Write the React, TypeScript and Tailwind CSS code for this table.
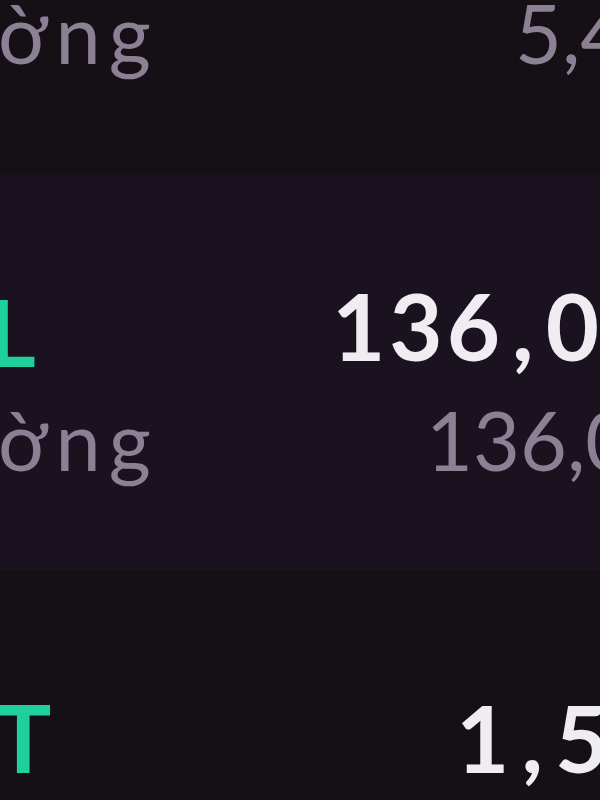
import React from "react";

function BoldNum({ parts }: { parts: string[] }) {
  return (
    <span className="text-[92px] font-bold text-[#efedf1] tracking-[4px]">
      {parts.map((p, i) => (
        <React.Fragment key={i}>
          {i > 0 && <span className="mx-[8px]">,</span>}
          {p}
        </React.Fragment>
      ))}
    </span>
  );
}

export default function App() {
  return (
    <div
      className="w-[600px] h-[800px] overflow-hidden bg-[#141015] flex flex-col"
      style={{ fontFamily: "Lato, 'Noto Sans', sans-serif" }}
    >
      {/* top section */}
      <div className="h-[175px] shrink-0 bg-[#141015] overflow-hidden">
        <div className="-mt-[8px] flex justify-between items-baseline leading-none whitespace-nowrap">
          <span className="-ml-[2px] text-[81px] tracking-[8px] text-[#8b8094]">ờng</span>
          <div className="w-[85px]">
            <span className="text-[81px] text-[#8b8094]">5,450,000</span>
          </div>
        </div>
      </div>

      {/* highlighted section */}
      <div className="h-[395px] shrink-0 bg-[#1b1220] flex flex-col pt-[105px]">
        <div className="flex justify-between items-baseline leading-none whitespace-nowrap">
          <span className="-ml-[12px] translate-y-[6px] text-[92px] font-bold text-[#1fcf9c]">L</span>
          <div className="w-[268px]">
            <BoldNum parts={["136", "000", "000"]} />
          </div>
        </div>
        <div className="mt-[27px] flex justify-between items-baseline leading-none whitespace-nowrap">
          <span className="-ml-[2px] text-[81px] tracking-[8px] text-[#8b8094]">ờng</span>
          <div className="w-[174px]">
            <span className="text-[81px] text-[#8b8094]">136,000,000</span>
          </div>
        </div>
      </div>

      {/* bottom section */}
      <div className="flex-1 bg-[#141015] pt-[120px]">
        <div className="flex justify-between items-baseline leading-none whitespace-nowrap">
          <span className="-ml-[5px] text-[94px] font-bold text-[#1fcf9c]">T</span>
          <div className="w-[144px]">
            <BoldNum parts={["1", "500", "000"]} />
          </div>
        </div>
      </div>
    </div>
  );
}
